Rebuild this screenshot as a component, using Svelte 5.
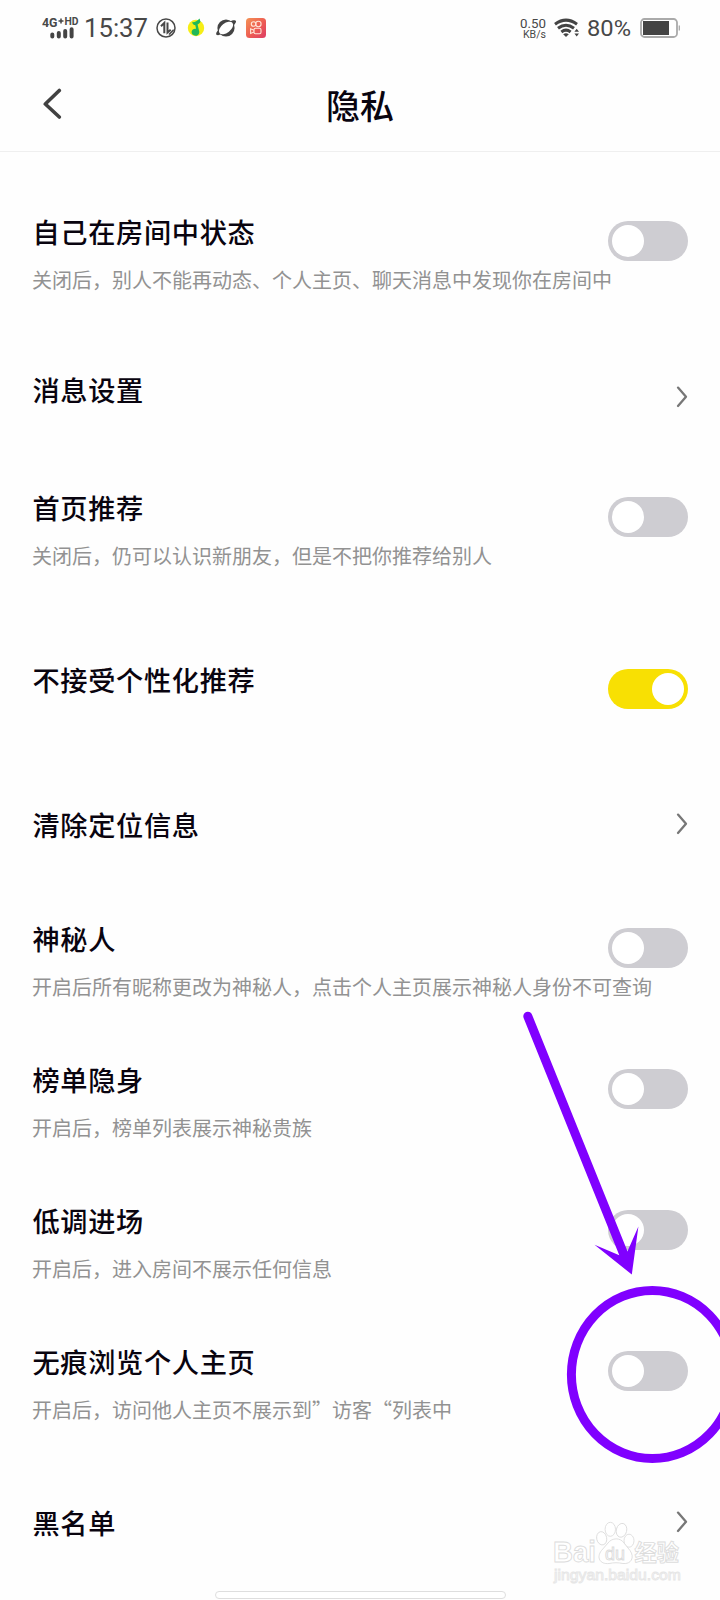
<script>
  const rows = [
    { title: '自己在房间中状态', note: '关闭后，别人不能再动态、个人主页、聊天消息中发现你在房间中', control: 'toggle', gap: 62 },
    { title: '消息设置', control: 'link', gap: 78, low: true },
    { title: '首页推荐', note: '关闭后，仍可以认识新朋友，但是不把你推荐给别人', control: 'toggle', gap: 81 },
    { title: '不接受个性化推荐', control: 'toggle', on: true, gap: 92 },
    { title: '清除定位信息', control: 'link', gap: 98 },
    { title: '神秘人', note: '开启后所有昵称更改为神秘人，点击个人主页展示神秘人身份不可查询', control: 'toggle', gap: 78 },
    { title: '榜单隐身', note: '开启后，榜单列表展示神秘贵族', control: 'toggle', gap: 61 },
    { title: '低调进场', note: '开启后，进入房间不展示任何信息', control: 'toggle', gap: 61 },
    { title: '无痕浏览个人主页', note: '开启后，访问他人主页不展示到”访客“列表中', control: 'toggle', gap: 61 },
    { title: '黑名单', control: 'link', gap: 81 }
  ];
</script>

<div class="screen" lang="zh-CN">
  <div class="status">
    <div class="side">
      <svg class="network" width="38" height="24" viewBox="0 0 38 24">
        <text x="0" y="11.2" font-size="12.5" font-weight="700" textLength="15.5" lengthAdjust="spacingAndGlyphs">4G</text>
        <path d="M16.5 5h5M19 2.5v5" stroke="#444" stroke-width="1.5" />
        <text x="22.5" y="9" font-size="10" font-weight="700" textLength="14" lengthAdjust="spacingAndGlyphs">HD</text>
        <path d="M10.3 18.5v2M16.8 17v3.5M23.2 15v5.5M29.6 13.2v7.3" stroke="#444" stroke-width="4" stroke-linecap="round" />
      </svg>
      <svg class="clock" width="66" height="32" viewBox="0 0 66 32">
        <text x="0" y="25.2" font-size="25" textLength="64" lengthAdjust="spacingAndGlyphs">15:37</text>
      </svg>
      <svg class="data" width="22" height="24" viewBox="0 0 22 24" fill="none" stroke="#484848">
        <circle cx="11" cy="12" r="9" stroke-width="1.5" />
        <path d="M6 10.2l3.3-3.3v10.3M12.5 6.5v10l3.2-2.7" stroke-width="2" />
        <path d="M14 18.5l4.7-4.8" stroke-width="1.6" />
      </svg>
      <svg class="music" width="18" height="24" viewBox="0 0 18 24">
        <circle cx="9" cy="12" r="8.2" fill="#f6ee16" />
        <path d="M5 6.2c2.6.3 5.2-.9 7.6-3.6l.9 3.4c-.9 1.3-1.9 2-2.9 2.4l1.4 6c1 2.6-.6 5.3-3.2 5.3-2.7 0-4.5-1.8-4.2-3.9.3-2.2 2.5-3.5 4.5-3L8.3 9.2C7 9.1 5.7 8 5 6.2z" fill="#20b858" />
      </svg>
      <svg class="planet" width="22" height="24" viewBox="0 0 22 24">
        <circle cx="11" cy="12" r="8.6" fill="#444" />
        <path d="M1.4 18.7C-.8 15.3 16.3 1.8 20.7 4.8c3 2.8-15.2 17-19.3 13.9z" fill="#444" />
        <ellipse cx="11" cy="12" rx="8.3" ry="4.7" transform="rotate(-38 11 12)" fill="#fff" />
      </svg>
      <svg class="camera" width="20" height="24" viewBox="0 0 20 24">
        <defs>
          <linearGradient id="warm" x1="0" y1="0" x2="1" y2="1">
            <stop offset="0" stop-color="#f49355" />
            <stop offset=".55" stop-color="#ed5b53" />
            <stop offset="1" stop-color="#dc3d66" />
          </linearGradient>
        </defs>
        <rect y="2" width="20" height="20" rx="3.5" fill="url(#warm)" />
        <g fill="none" stroke="#ffe5d8" stroke-width="1.1">
          <circle cx="7.6" cy="8" r="2.3" />
          <circle cx="12.4" cy="8" r="2.7" />
          <rect x="8" y="12.3" width="7" height="5.4" rx="1.5" />
          <path d="M8 14.2l-3.4-1.4v4.6L8 16" />
        </g>
      </svg>
    </div>
    <div class="side">
      <svg class="rate" width="27" height="24" viewBox="0 0 27 24">
        <text x="0" y="11.7" font-size="12" textLength="26" lengthAdjust="spacingAndGlyphs">0.50</text>
        <text x="3" y="21.6" font-size="10.2" textLength="23" lengthAdjust="spacingAndGlyphs">KB/s</text>
      </svg>
      <svg class="wifi" width="26" height="24" viewBox="0 0 26 24" fill="none" stroke="#444" stroke-width="3">
        <path d="M1 8.2q11-8.2 22 0" />
        <path d="M4 12.3q8-6.2 16 0" />
        <path d="M7.4 16q4.6-3.7 9.2 0" />
        <path d="M9.2 18.2q2.8-2 5.6 0L12 21z" fill="#444" stroke="none" />
        <path d="M20.4 15.8l2.3-3 2.3 3zM20.4 17.6l2.3 3 2.3-3z" fill="#444" stroke="none" />
      </svg>
      <svg class="percent" width="45" height="24" viewBox="0 0 45 24">
        <text x="0" y="20" font-size="21.5" textLength="44" lengthAdjust="spacingAndGlyphs">80%</text>
      </svg>
      <svg class="battery" width="40" height="24" viewBox="0 0 40 24">
        <rect x="1" y="3" width="36" height="18" rx="3.5" fill="#fff" stroke="#aaa" stroke-width="1.8" />
        <rect x="3" y="5" width="26" height="14" fill="#444" />
        <path d="M39.3 9.5v5" stroke="#aaa" stroke-width="1.3" />
      </svg>
    </div>
  </div>

  <header>
    <svg class="back" width="20" height="32" viewBox="0 0 20 32" fill="none">
      <path d="M17.3 2.5L3.3 16l14 13" stroke="#414141" stroke-width="3.6" stroke-linecap="round" stroke-linejoin="round" />
    </svg>
    <h1>隐私</h1>
  </header>

  <main>
    {#each rows as row}
      <section class:low={row.low} style:margin-top="{row.gap}px">
        <div class="copy">
          <h2>{row.title}</h2>
          {#if row.note}<p>{row.note}</p>{/if}
        </div>
        {#if row.control === 'toggle'}
          <div class="toggle" class:on={row.on}><span></span></div>
        {:else}
          <svg class="chevron" width="14" height="24" viewBox="0 0 14 24" fill="none">
            <path d="M4 2.6L12 11.7 4 21" stroke="#777" stroke-width="2.3" stroke-linecap="round" stroke-linejoin="round" />
          </svg>
        {/if}
      </section>
    {/each}
  </main>

  <div class="homebar"></div>

  <svg class="watermark" width="136" height="68" viewBox="0 0 136 68">
    <g fill="#fff" stroke="#dcdcdc" stroke-width=".9">
      <text x="3" y="42" font-size="29" font-weight="700" textLength="43" lengthAdjust="spacingAndGlyphs">Bai</text>
      <ellipse cx="51.7" cy="18.3" rx="5" ry="6.7" transform="rotate(-12 51.7 18.3)" />
      <ellipse cx="60.3" cy="9.3" rx="5.2" ry="7" />
      <ellipse cx="71.5" cy="10.3" rx="5.2" ry="7" transform="rotate(14 71.5 10.3)" />
      <ellipse cx="79" cy="20.7" rx="5" ry="6.5" />
      <path d="M58 23c4-5.5 12.5-5.5 16 0l6 7.5c5 7 1 14-7 13-5-1-9-1-14 0-9 1-13-6-7.5-13z" />
      <text x="55" y="39.5" font-size="18" textLength="20" lengthAdjust="spacingAndGlyphs">du</text>
      <text class="han" x="84.5" y="41" font-size="22.5" font-weight="700" textLength="44.5" lengthAdjust="spacingAndGlyphs">经验</text>
    </g>
    <text x="4" y="60" font-size="15" fill="#fff" stroke="#e6e6e6" stroke-width=".9" textLength="127" lengthAdjust="spacingAndGlyphs">jingyan.baidu.com</text>
  </svg>

  <svg class="marker" width="720" height="1600" viewBox="0 0 720 1600">
    <path d="M527.8 1016.2L624.5 1256" stroke="#8000ff" stroke-width="9" stroke-linecap="round" />
    <path d="M594.5 1244.8L619.3 1255.3 627.4 1251.6 638.4 1226.5 631.8 1274.5z" fill="#8000ff" />
    <ellipse cx="652.3" cy="1374.5" rx="80.9" ry="84.1" fill="none" stroke="#8000ff" stroke-width="9" />
  </svg>
</div>

<style>
  :global(body) { background: #fefefe; }
  .screen {
    position: relative;
    width: 720px;
    height: 1600px;
    overflow: hidden;
    background: #fefefe;
    font-family: "Noto Sans CJK SC", sans-serif;
    color: #09040f;
    display: flex;
    flex-direction: column;
  }
  svg { display: block; flex: none; }
  .status {
    height: 56px;
    flex: none;
    display: flex;
    justify-content: space-between;
    align-items: center;
    padding: 0 40px 0 42px;
  }
  .side { display: flex; align-items: center; }
  .status text { font-family: Roboto, sans-serif; fill: #484848; }
  .clock { margin-left: 4px; }
  .data { margin-left: 5px; }
  .music { margin-left: 10px; }
  .planet { margin-left: 10px; }
  .camera { margin-left: 9px; }
  .wifi { margin-left: 7px; }
  .percent { margin-left: 7px; }
  .battery { margin-left: 8px; }
  header {
    height: 96px;
    flex: none;
    box-sizing: border-box;
    border-bottom: 1px solid #efefef;
    display: grid;
    grid-template-columns: 20px 1fr 20px;
    align-items: center;
    padding: 0 42px 0 42px;
  }
  h1 {
    margin: 2px 0 0;
    font-size: 34px;
    line-height: 48px;
    font-weight: 500;
    text-align: center;
  }
  main { padding: 0 32px; }
  section { display: flex; justify-content: space-between; align-items: flex-start; }
  .copy { flex: 1; min-width: 0; white-space: nowrap; }
  h2 {
    margin: -1px 0 0;
    padding: 0 0 1px 0.5px;
    font-size: 27.2px;
    letter-spacing: 0.68px;
    line-height: 36px;
    font-weight: 500;
  }
  p { margin: 16px 0 0; font-size: 20px; line-height: 28px; font-weight: 400; color: #929292; }
  .toggle {
    flex: none;
    box-sizing: border-box;
    width: 80px;
    height: 40px;
    margin-top: 7px;
    padding: 4px;
    border-radius: 20px;
    background: #cecdd2;
    display: flex;
  }
  .toggle.on { background: #f8e003; justify-content: flex-end; }
  .toggle span { width: 32px; height: 32px; border-radius: 50%; background: #fff; }
  .chevron { margin-top: 5px; }
  .low .chevron { margin-top: 13px; }
  .homebar {
    position: absolute;
    left: 214.5px;
    top: 1591px;
    box-sizing: border-box;
    width: 291px;
    height: 8px;
    border: 1px solid #dedede;
    border-radius: 4px;
    background: #fff;
  }
  .watermark { position: absolute; left: 550px; top: 1520px; }
  .watermark text { font-family: "Liberation Sans", sans-serif; }
  .watermark .han { font-family: "Noto Sans CJK SC", sans-serif; }
  .marker { position: absolute; left: 0; top: 0; pointer-events: none; }
</style>
